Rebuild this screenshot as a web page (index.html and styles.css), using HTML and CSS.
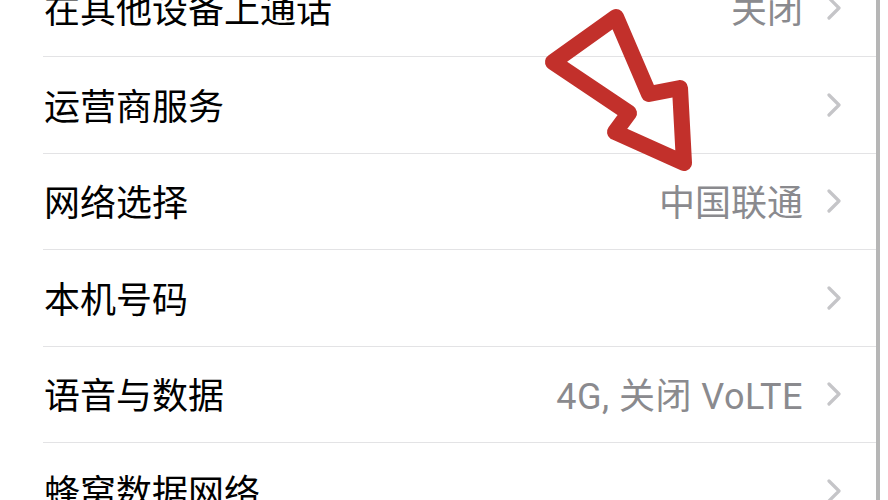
FILE: index.html
```html
<!DOCTYPE html>
<html lang="zh-CN">
<head>
<meta charset="utf-8">
<title>蜂窝网络</title>
<link rel="stylesheet" href="styles.css">
</head>
<body>
<div class="screen">
  <div class="list">
    <div class="row"><span class="label">在其他设备上通话</span><span class="value">关闭</span><svg class="chev" viewBox="0 0 16 24"><polyline points="3,2 13,12 3,22"/></svg></div>
    <div class="row"><span class="label">运营商服务</span><span class="value"></span><svg class="chev" viewBox="0 0 16 24"><polyline points="3,2 13,12 3,22"/></svg></div>
    <div class="row"><span class="label">网络选择</span><span class="value">中国联通</span><svg class="chev" viewBox="0 0 16 24"><polyline points="3,2 13,12 3,22"/></svg></div>
    <div class="row"><span class="label">本机号码</span><span class="value"></span><svg class="chev" viewBox="0 0 16 24"><polyline points="3,2 13,12 3,22"/></svg></div>
    <div class="row"><span class="label">语音与数据</span><span class="value latin">4G, 关闭 VoLTE</span><svg class="chev" viewBox="0 0 16 24"><polyline points="3,2 13,12 3,22"/></svg></div>
    <div class="row"><span class="label">蜂窝数据网络</span><span class="value"></span><svg class="chev" viewBox="0 0 16 24"><polyline points="3,2 13,12 3,22"/></svg></div>
  </div>
</div>
<svg class="mark" viewBox="0 0 888 500" width="888" height="500">
  <polygon points="616,17 553,62 629,113 615,132 684,163 680,88 649,94"/>
</svg>
</body>
</html>
```
FILE: styles.css
```css
html, body {
  margin: 0;
  padding: 0;
  background: #ffffff;
  overflow: hidden;
}
body {
  width: 888px;
  height: 500px;
  position: relative;
  font-family: "Roboto", "Noto Sans CJK SC", sans-serif;
}
.screen {
  display: flex;
  box-sizing: border-box;
  width: 888px;
  height: 500px;
  padding-right: 8px;
  overflow: hidden;
  background: #ffffff;
}
.list {
  flex: 1 1 0;
  min-width: 0;
  height: 540px;
  margin-top: -39.5px;
  border-right: 4px solid #b6b6b6;
  background: #ffffff;
}
.row {
  display: flex;
  align-items: center;
  height: 96.5px;
  box-sizing: border-box;
  margin-left: 43px;
  padding-left: 1px;
  padding-right: 34px;
  border-bottom: 1px solid #e3e3e5;
}
.label {
  flex: 1;
  font-size: 36px;
  line-height: 1;
  color: #000000;
  padding-top: 6px;
  white-space: nowrap;
}
.value {
  font-size: 36px;
  line-height: 1;
  color: #8a8a8e;
  padding-top: 6px;
  white-space: nowrap;
  margin-right: 23px;
}
.value.latin {
  letter-spacing: 0.5px;
}
.chev {
  width: 16px;
  height: 24px;
  flex: none;
}
.chev polyline {
  fill: none;
  stroke: #c5c5c8;
  stroke-width: 3.2;
  stroke-linecap: round;
  stroke-linejoin: round;
}
.mark {
  position: absolute;
  left: 0;
  top: 0;
  pointer-events: none;
}
.mark polygon {
  fill: none;
  stroke: #c2302b;
  stroke-width: 16;
  stroke-linejoin: round;
}
```
